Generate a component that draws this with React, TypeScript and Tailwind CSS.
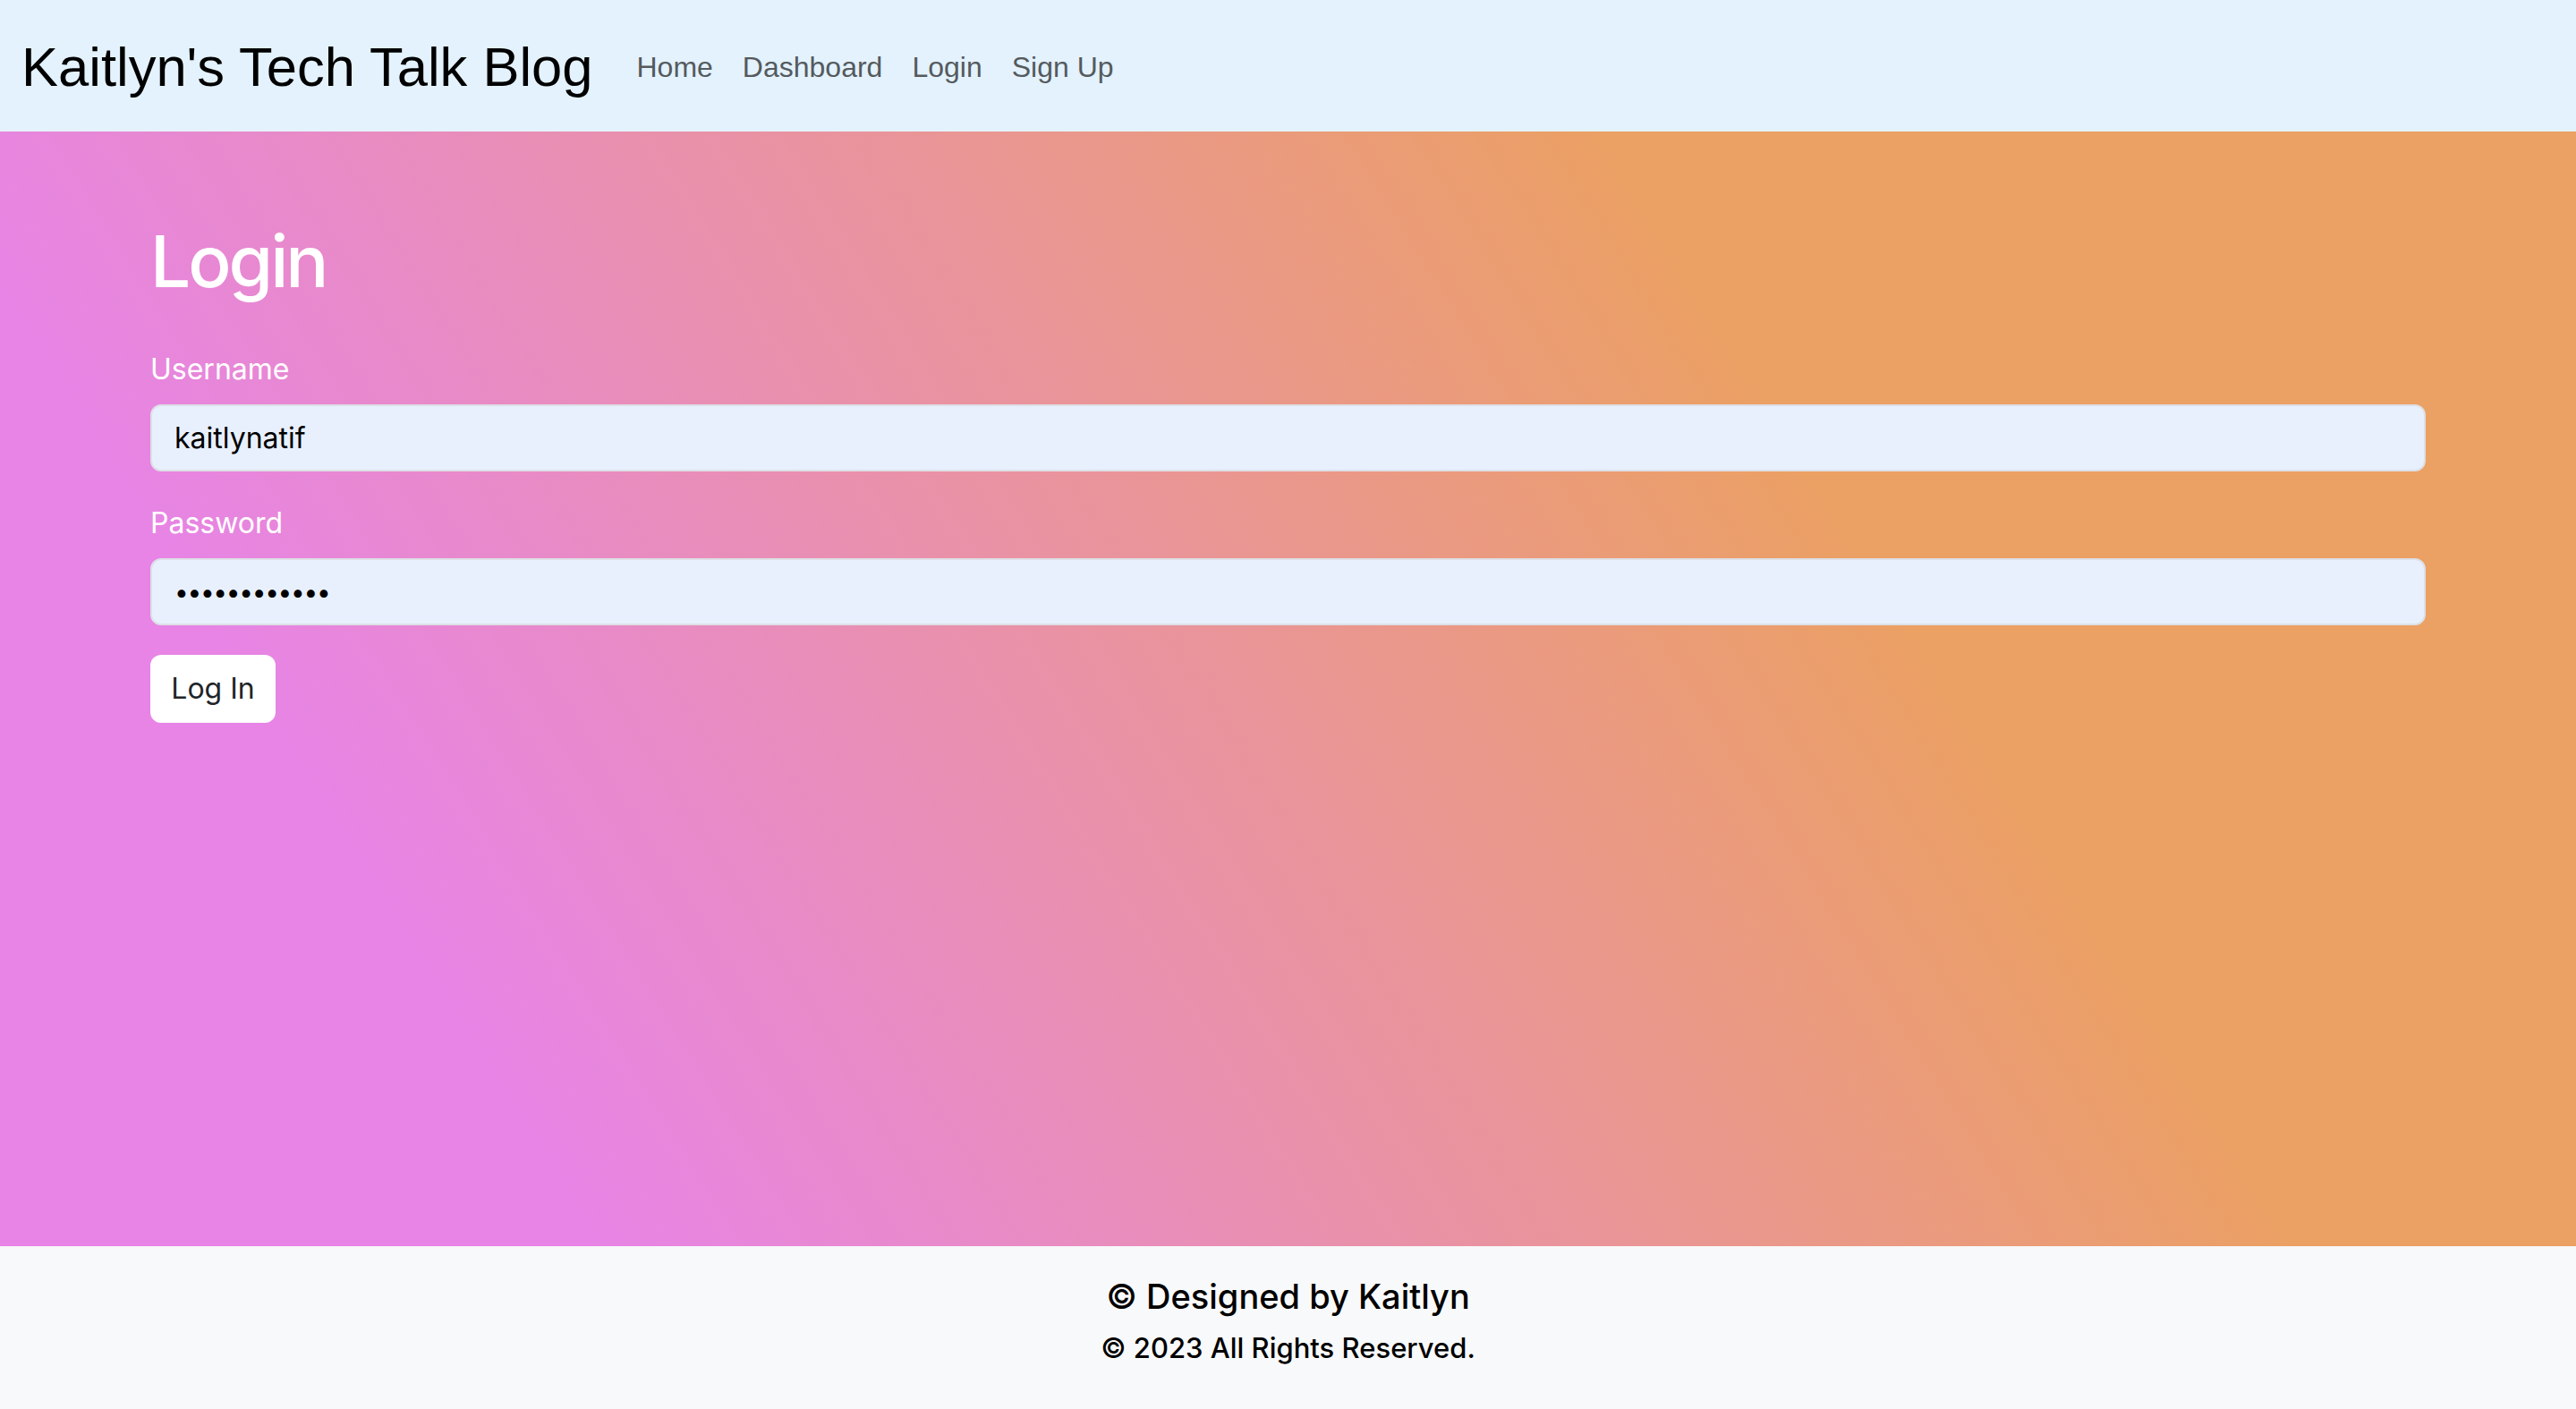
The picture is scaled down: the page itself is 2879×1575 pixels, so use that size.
import React from 'react';

export default function App() {
  const links = ['Home', 'Dashboard', 'Login', 'Sign Up'];

  return (
    <div className="h-screen flex flex-col font-['Inter','Noto_Sans',sans-serif]">
      {/* Navbar */}
      <nav className="h-[147px] shrink-0 bg-[#e3f2fd] flex items-center px-[24px] pt-[3px]">
        <a className="font-['Liberation_Sans',Arial,sans-serif] text-[61.5px] leading-[60px] text-black">
          Kaitlyn's Tech Talk Blog
        </a>
        <ul className="flex items-center gap-[33px] ml-[49px] font-['Liberation_Sans',Arial,sans-serif] text-[32px] leading-[32px] text-[#555a5e]">
          {links.map((link) => (
            <li key={link}>
              <a>{link}</a>
            </li>
          ))}
        </ul>
      </nav>

      {/* Main */}
      <main className="flex-1 bg-[linear-gradient(58deg,#e784e6_18%,#eba064_70%)]">
        <div className="px-[168px] pt-[97px]">
          <h1 className="text-[80px] leading-[96px] text-white font-medium tracking-[-3px] mb-[49px]">Login</h1>
          <form className="flex flex-col">
            <label className="text-[32px] leading-[48px] text-white mb-[15px]">Username</label>
            <input
              type="text"
              readOnly
              defaultValue="kaitlynatif"
              className="h-[75px] w-full rounded-[12px] border-2 border-[#dde0e6] bg-[#e8f0fe] px-[25px] text-[32px] text-black outline-none mb-[34px]"
            />
            <label className="text-[32px] leading-[48px] text-white mb-[15px]">Password</label>
            <input
              type="password"
              readOnly
              defaultValue="kaitlynatif1"
              className="h-[75px] w-full rounded-[12px] border-2 border-[#dde0e6] bg-[#e8f0fe] px-[25px] text-[28px] text-black outline-none mb-[33px] tracking-[-1.3px]"
            />
            <button
              type="button"
              className="w-[140px] h-[76px] rounded-[12px] bg-white text-[32px] text-[#212529]"
            >
              Log In
            </button>
          </form>
        </div>
      </main>

      {/* Footer */}
      <footer className="h-[182px] shrink-0 bg-[#f8f9fa] flex flex-col items-center pt-[33px] text-black">
        <h5 className="text-[38px] leading-[46px] font-medium mb-[12px]">© Designed by Kaitlyn</h5>
        <p className="text-[31px] leading-[46px] font-medium">© 2023 All Rights Reserved.</p>
      </footer>
    </div>
  );
}
